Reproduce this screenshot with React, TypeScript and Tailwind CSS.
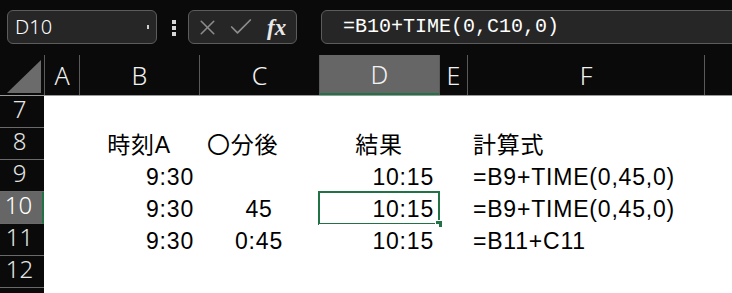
import React from "react";
import { X, Check } from "lucide-react";

const grid = "grid grid-cols-[44px_35px_120px_120px_120px_28px_237px_1fr]";
const cellFont = { fontFamily: '"Liberation Sans", "Noto Sans CJK JP", sans-serif' };
const uiFont = { fontFamily: '"Noto Sans", "Noto Sans CJK JP", sans-serif' };

type Row = {
  n: number;
  b?: string;
  c?: string;
  d?: string;
  f?: string;
  head?: boolean;
};

const rows: Row[] = [
  { n: 7 },
  { n: 8, b: "時刻A", c: "〇分後", d: "結果", f: "計算式", head: true },
  { n: 9, b: "9:30", d: "10:15", f: "=B9+TIME(0,45,0)" },
  { n: 10, b: "9:30", c: "45", d: "10:15", f: "=B9+TIME(0,45,0)" },
  { n: 11, b: "9:30", c: "0:45", d: "10:15", f: "=B11+C11" },
  { n: 12 },
  { n: 13 },
];

const colHeads = ["A", "B", "C", "D", "E", "F", ""];

function FormulaBar() {
  return (
    <div className="flex h-[55px] items-start overflow-hidden bg-[#0a0a0a] pt-[10px]">
      <div className="relative ml-[7px] flex h-[34px] w-[150px] shrink-0 items-center rounded-md border border-[#5c5c5c] bg-[#262626] pl-[7px]">
        <span className="text-[20px] font-light leading-none text-white" style={uiFont}>
          D10
        </span>
        <span className="absolute right-[7px] top-[14px] h-[4px] w-[2px] bg-[#cfcfcf]" />
      </div>
      <div className="ml-[15px] mt-[10px] flex shrink-0 flex-col gap-[2px]">
        <span className="h-[4px] w-[4px] bg-[#d6d6d6]" />
        <span className="h-[4px] w-[4px] bg-[#d6d6d6]" />
        <span className="h-[4px] w-[4px] bg-[#d6d6d6]" />
      </div>
      <div className="ml-[12px] flex h-[34px] w-[109px] shrink-0 items-center rounded-md border border-[#5c5c5c] bg-[#262626] pl-[6px]">
        <X className="h-[25px] w-[25px] text-[#8c8c8c]" strokeWidth={1.5} />
        <Check className="ml-[7px] h-[28px] w-[28px] text-[#8c8c8c]" strokeWidth={1.5} />
        <span
          className="ml-[12px] text-[23px] font-bold italic leading-none text-[#e8e8e8]"
          style={{ fontFamily: '"Liberation Serif", serif' }}
        >
          fx
        </span>
      </div>
      <div className="ml-[24px] flex h-[34px] w-[440px] shrink-0 items-center rounded-md border border-[#5c5c5c] bg-[#262626] pl-[21px]">
        <span
          className="text-[20px] leading-none text-white"
          style={{ fontFamily: '"Liberation Mono", monospace' }}
        >
          =B10+TIME(0,C10,0)
        </span>
      </div>
    </div>
  );
}

function HeaderRow() {
  return (
    <div className={`${grid} h-[41px] border-b border-[#9a9a9a] bg-[#0a0a0a]`}>
      <div className="relative">
        <svg className="absolute left-0 top-0" width="44" height="41" viewBox="0 0 44 41">
          <polygon points="7,38 41,5 41,38" fill="#6b6b6b" />
        </svg>
      </div>
      {colHeads.map((h, i) => (
        <div
          key={i}
          className={`flex items-center justify-center border-l border-[#5a5a5a] text-[25px] font-light leading-none text-[#f2f2f2] ${
            h === "D" ? "border-b-2 border-b-[#217346] bg-[#666666]" : ""
          }`}
          style={uiFont}
        >
          {h}
        </div>
      ))}
    </div>
  );
}

function DataRow({ r }: { r: Row }) {
  const sel = r.n === 10;
  return (
    <div className={`${grid} h-[32px]`}>
      <div
        className={`flex justify-center border-b border-[#6a6a6a] pr-[5px] pt-[1px] text-[24px] font-light leading-none ${
          sel ? "border-r-2 border-r-[#217346] bg-[#666666] text-white" : "bg-[#0a0a0a] text-[#e6e6e6]"
        }`}
        style={uiFont}
      >
        {r.n}
      </div>
      <div className="bg-white" />
      <div
        className={`flex items-end bg-white pb-[3px] text-[23px] leading-none tracking-[0.8px] text-black ${
          r.head ? "justify-center" : "justify-end pr-[5px]"
        }`}
        style={cellFont}
      >
        {r.b}
      </div>
      <div
        className={`flex items-end bg-white pb-[3px] text-[23px] leading-none tracking-[0.8px] text-black ${
          r.head ? "justify-start pl-[8px]" : "justify-center"
        }`}
        style={cellFont}
      >
        {r.c}
      </div>
      <div
        className={`relative flex items-end bg-white pb-[3px] text-[23px] leading-none tracking-[0.8px] text-black ${
          r.head ? "justify-center" : "justify-end pr-[5px]"
        }`}
        style={cellFont}
      >
        {r.d}
        {sel && (
          <>
            <span className="absolute inset-[-1px] border-2 border-[#217346]" />
            <span className="absolute bottom-[-3px] right-[-3px] h-[6px] w-[6px] bg-[#217346] outline outline-1 outline-white" />
          </>
        )}
      </div>
      <div className="bg-white" />
      <div
        className="flex items-end bg-white pb-[3px] pl-[6px] text-[23px] leading-none tracking-[0.8px] text-black"
        style={cellFont}
      >
        {r.f}
      </div>
      <div className="bg-white" />
    </div>
  );
}

export default function App() {
  return (
    <div className="h-[293px] w-[732px] overflow-hidden bg-white">
      <FormulaBar />
      <HeaderRow />
      {rows.map((r) => (
        <DataRow key={r.n} r={r} />
      ))}
    </div>
  );
}
